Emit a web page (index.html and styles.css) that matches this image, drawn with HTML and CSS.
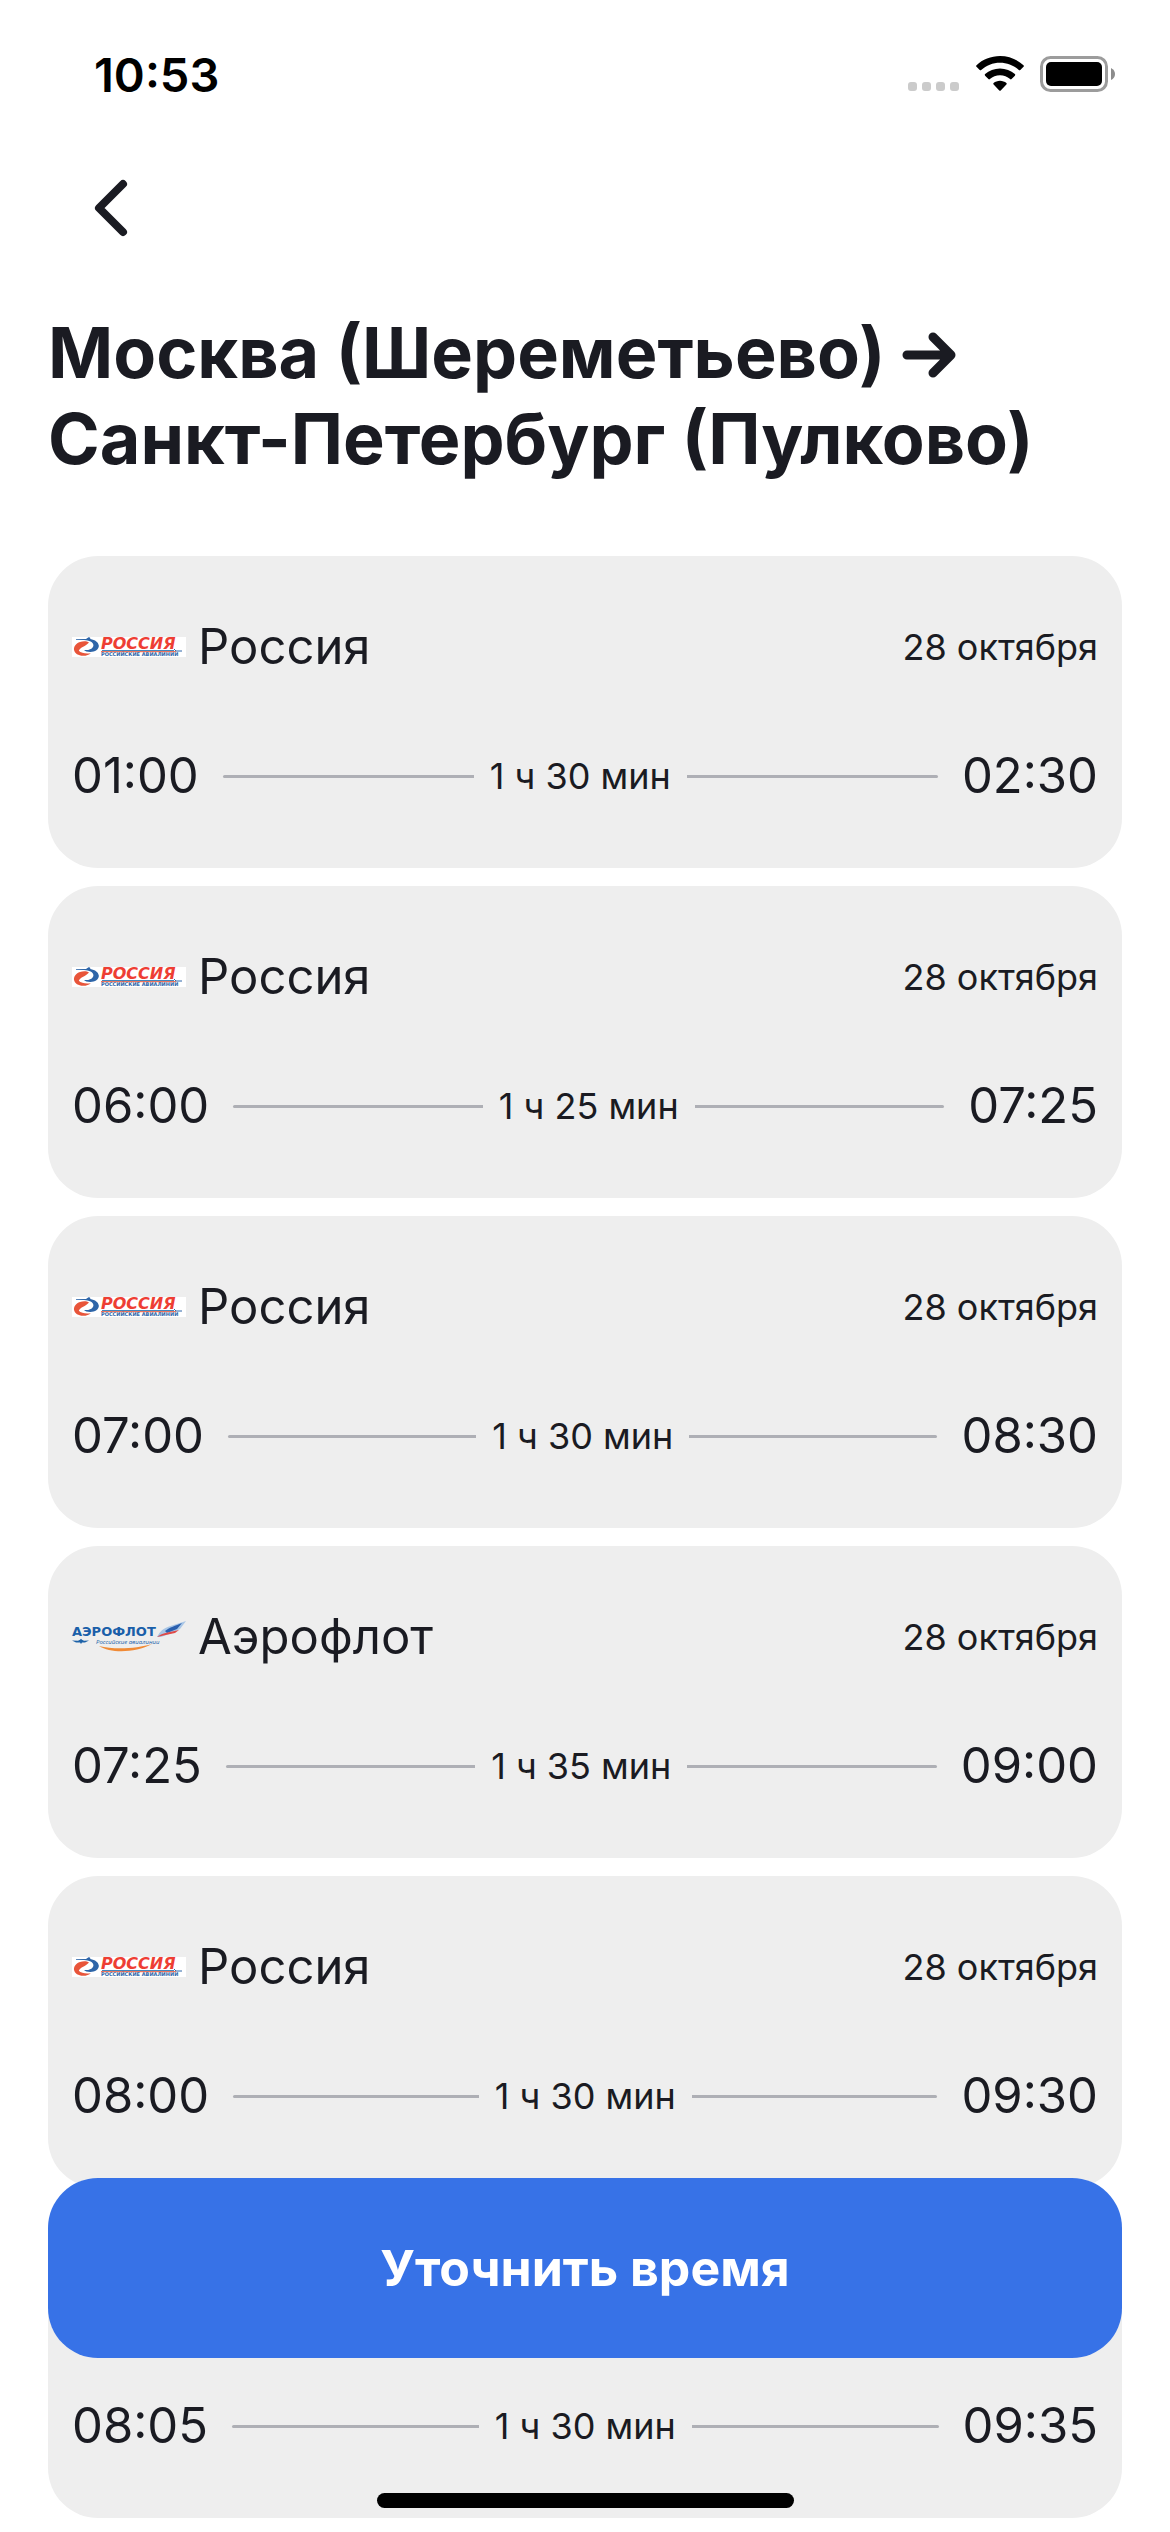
FILE: index.html
```html
<!DOCTYPE html>
<html lang="ru">
<head>
<meta charset="utf-8">
<meta name="viewport" content="width=device-width, initial-scale=1">
<title>Москва (Шереметьево) → Санкт-Петербург (Пулково)</title>
<link rel="stylesheet" href="styles.css">
</head>
<body>
<header class="status-bar">
  <time class="status-time">10:53</time>
  <div class="status-icons">
    <svg class="icon-cell" viewBox="0 0 52 36" fill="#cbcbcb" aria-hidden="true">
      <rect x="0" y="26" width="9" height="9" rx="3"/><rect x="14" y="26" width="9" height="9" rx="3"/><rect x="28" y="26" width="9" height="9" rx="3"/><rect x="42" y="26" width="9" height="9" rx="3"/>
    </svg>
    <svg class="icon-wifi" viewBox="0 0 48 36" aria-hidden="true">
      <path d="M24 0C33 0 41.500 3.500 47.500 9.200q.8.800 0 1.600L44.300 14q-.7.700-1.500 0C37.800 9.400 31.200 6.700 24 6.700S10.200 9.400 5.200 14q-.8.700-1.500 0L.5 10.800q-.8-.8 0-1.600C6.500 3.500 15 0 24 0Z"/>
      <path d="M24 12.400c5.700 0 10.900 2.200 14.900 5.700q.8.800 0 1.600l-3.300 3.300q-.7.700-1.500.1C31.400 20.700 27.900 19.200 24 19.200s-7.400 1.500-10.100 3.900q-.8.600-1.500-.1l-3.300-3.300q-.8-.8 0-1.600C13.100 14.600 18.300 12.400 24 12.400Z"/>
      <path d="M24 24.800c2.500 0 4.700.9 6.400 2.300q.8.700 0 1.500l-5.700 5.800q-.7.700-1.400 0l-5.700-5.800q-.8-.8 0-1.500c1.700-1.400 3.900-2.300 6.400-2.300Z"/>
    </svg>
    <svg class="icon-battery" viewBox="0 0 76 36" aria-hidden="true">
      <rect x="1.500" y="1.500" width="65" height="33" rx="9" fill="none" stroke="#9c9c9c" stroke-width="3"/>
      <rect x="6" y="6" width="56" height="24" rx="5"/>
      <path d="M71 12q4 2 4 6t-4 6Z" fill="#8c8c8c"/>
    </svg>
  </div>
</header>

<nav class="nav-bar">
  <button class="back" type="button" aria-label="Назад">
    <svg class="icon-back" viewBox="0 0 34 58" aria-hidden="true"><path d="M29 5L5 29l24 24"/></svg>
  </button>
</nav>

<main class="content">
  <h1 class="title">Москва (Шереметьево) <svg class="icon-arrow" viewBox="0 0 54 46" role="img" aria-label="→"><path d="M5 23h43M31 5l18 18-18 18"/></svg> Санкт-Петербург (Пулково)</h1>

  <ul class="trips">
    <li class="trip">
      <div class="carrier">
        <svg class="logo logo-rossiya" viewBox="0 0 114 20" aria-hidden="true">
          <g id="logo-rossiya">
            <rect width="114" height="20" fill="#fff"/>
            <path d="M4 2h10l2.500-1.800 1.500.2.400 1.600c4.800.8 8 3.400 8.400 6.600.5 3.800-4 6.400-8.400 6.400-3.200 0-5.400-.8-6.400-2 4 .4 9.200-1 9.400-4.600C21.600 5.200 17 3.200 12 3L4 2.800Z" fill="#2d65a8"/>
            <path d="M17 5.400C15 4 11.500 3.800 8 4.900 4 6.200 1.600 9.400 2 12.800c.5 3.800 4.500 6 9 6 3.500 0 6.500-1.200 7.800-2.600-4 .6-9.800.2-12-2.400 1-3.600 6-3.800 10.200-8.400Z" fill="#e8553a"/>
            <text class="logo-rossiya-name" x="29" y="12">РОССИЯ</text>
            <path d="M30 13.500h72" stroke="#3f86bd"/>
            <path d="M102 12l2 2h6" stroke="#2d65a8" fill="none"/>
            <path d="M29 14.700h75" stroke="#e8553a"/>
            <text class="logo-rossiya-sub" x="29" y="19">РОССИЙСКИЕ АВИАЛИНИИ</text>
          </g>
        </svg>
        <span class="name">Россия</span><time class="date">28 октября</time>
      </div>
      <div class="schedule"><time class="hour">01:00</time><span class="line"></span><span class="duration">1 ч 30 мин</span><span class="line line-end"></span><time class="hour">02:30</time></div>
    </li>
    <li class="trip">
      <div class="carrier"><svg class="logo logo-rossiya" viewBox="0 0 114 20" aria-hidden="true"><use href="#logo-rossiya"/></svg><span class="name">Россия</span><time class="date">28 октября</time></div>
      <div class="schedule"><time class="hour">06:00</time><span class="line"></span><span class="duration">1 ч 25 мин</span><span class="line line-end"></span><time class="hour">07:25</time></div>
    </li>
    <li class="trip">
      <div class="carrier"><svg class="logo logo-rossiya" viewBox="0 0 114 20" aria-hidden="true"><use href="#logo-rossiya"/></svg><span class="name">Россия</span><time class="date">28 октября</time></div>
      <div class="schedule"><time class="hour">07:00</time><span class="line"></span><span class="duration">1 ч 30 мин</span><span class="line line-end"></span><time class="hour">08:30</time></div>
    </li>
    <li class="trip">
      <div class="carrier">
        <svg class="logo logo-aeroflot" viewBox="0 0 114 36" aria-hidden="true">
          <text class="logo-aeroflot-name" x="0" y="17">АЭРОФЛОТ</text>
          <text class="logo-aeroflot-sub" x="24" y="25">Российские авиалинии</text>
          <path d="M0 21.500l6 .2 2-1 1-1 1 1 2 1 5-.2-4 2h-3l-1 1.500-1-1.500H4Z" fill="#1d62a8"/>
          <path d="M27 27c12 7.500 36 7 53-2-15 4.500-37 6-53 2Z" fill="#f08a35"/>
          <path d="M85 18c3-6 7-9 12-10.500L114 2l-6 8-8 4-11 4Z" fill="#a9c6e6"/>
          <path d="M93 12c5-4 10-5 17-8l-5 6-10 4Z" fill="#2a5fae"/>
          <path d="M85 18c5-4 9-4 13-5l9-2-4 3-7 1.500Z" fill="#e04a48"/>
        </svg>
        <span class="name">Аэрофлот</span><time class="date">28 октября</time>
      </div>
      <div class="schedule"><time class="hour">07:25</time><span class="line"></span><span class="duration">1 ч 35 мин</span><span class="line line-end"></span><time class="hour">09:00</time></div>
    </li>
    <li class="trip">
      <div class="carrier"><svg class="logo logo-rossiya" viewBox="0 0 114 20" aria-hidden="true"><use href="#logo-rossiya"/></svg><span class="name">Россия</span><time class="date">28 октября</time></div>
      <div class="schedule"><time class="hour">08:00</time><span class="line"></span><span class="duration">1 ч 30 мин</span><span class="line line-end"></span><time class="hour">09:30</time></div>
    </li>
    <li class="trip">
      <div class="carrier"></div>
      <div class="schedule"><time class="hour">08:05</time><span class="line"></span><span class="duration">1 ч 30 мин</span><span class="line line-end"></span><time class="hour">09:35</time></div>
    </li>
  </ul>
</main>

<footer class="dock">
  <button class="refine" type="button">Уточнить время</button>
  <div class="home-indicator"></div>
</footer>
</body>
</html>
```
FILE: styles.css
```css
* {
  box-sizing: border-box;
}

body {
  margin: 0;
  background: #fff;
  color: #1a1b22;
  font-family: Inter, "Liberation Sans", sans-serif;
}

.status-bar {
  display: flex;
  justify-content: space-between;
  align-items: center;
  height: 148px;
  padding: 0 54px 0 94px;
  color: #000;
}

.status-time {
  font-size: 47px;
  font-weight: 600;
}

.status-icons {
  display: flex;
  gap: 16px;
}

.icon-cell {
  width: 52px;
  height: 36px;
}

.icon-wifi {
  width: 48px;
  height: 36px;
}

.icon-battery {
  width: 76px;
  height: 36px;
}

.nav-bar {
  display: flex;
  align-items: center;
  height: 120px;
  padding: 0 82px;
}

.back {
  display: flex;
  padding: 12px;
  border: 0;
  background: none;
}

.icon-back {
  width: 34px;
  height: 58px;
}

.icon-back path,
.icon-arrow path {
  fill: none;
  stroke: #1a1b22;
  stroke-width: 8;
  stroke-linecap: round;
  stroke-linejoin: round;
}

.icon-arrow path {
  stroke-width: 9;
}

.content {
  padding: 42px 48px 14px;
}

.title {
  margin: 0 0 74px;
  font-size: 70px;
  line-height: 86px;
  font-weight: 700;
}

.icon-arrow {
  width: 54px;
  height: 46px;
}

.trips {
  display: flex;
  flex-direction: column;
  gap: 18px;
  margin: 0;
  padding: 0;
  list-style: none;
}

.trip {
  padding: 60px 24px 62px;
  border-radius: 50px;
  background: #eee;
}

.carrier {
  display: flex;
  align-items: center;
  gap: 12px;
  height: 62px;
}

.logo {
  width: 114px;
  overflow: visible;
}

.logo-rossiya {
  height: 20px;
}

.logo-aeroflot {
  height: 36px;
}

.name,
.hour {
  font-size: 49px;
  line-height: 64px;
}

.date,
.duration {
  font-size: 36px;
  line-height: 48px;
}

.date {
  margin-left: auto;
}

.schedule {
  display: flex;
  align-items: center;
  height: 62px;
  margin-top: 67px;
  margin-bottom: -1px;
}

.line {
  flex: 1;
  height: 3px;
  margin-left: 24px;
  border-radius: 2px 0 0 2px;
  background: #aeafb5;
}

.line-end {
  margin: 0 24px 0 0;
  border-radius: 0 2px 2px 0;
}

.duration {
  padding: 0 16px;
}

.dock {
  position: fixed;
  inset: auto 0 0;
  display: flex;
  flex-direction: column;
  align-items: center;
  gap: 135px;
  padding: 0 48px 24px;
}

.refine {
  width: 100%;
  height: 180px;
  border: 0;
  border-radius: 50px;
  background: #3772e7;
  color: #fff;
  font-family: inherit;
  font-size: 50px;
  font-weight: 700;
}

.home-indicator {
  width: 417px;
  height: 15px;
  border-radius: 8px;
  background: #000;
}

.logo-rossiya-name {
  fill: #ee3e33;
  font: italic 700 16px "DejaVu Sans", sans-serif;
}

.logo-rossiya-sub {
  fill: #2d65a8;
  font: 700 5px "DejaVu Sans", sans-serif;
}

.logo-aeroflot-name {
  fill: #1a5fa9;
  font: 700 13px "DejaVu Sans", sans-serif;
}

.logo-aeroflot-sub {
  fill: #1a5fa9;
  font: italic 6px "Open Sans", sans-serif;
}
```
